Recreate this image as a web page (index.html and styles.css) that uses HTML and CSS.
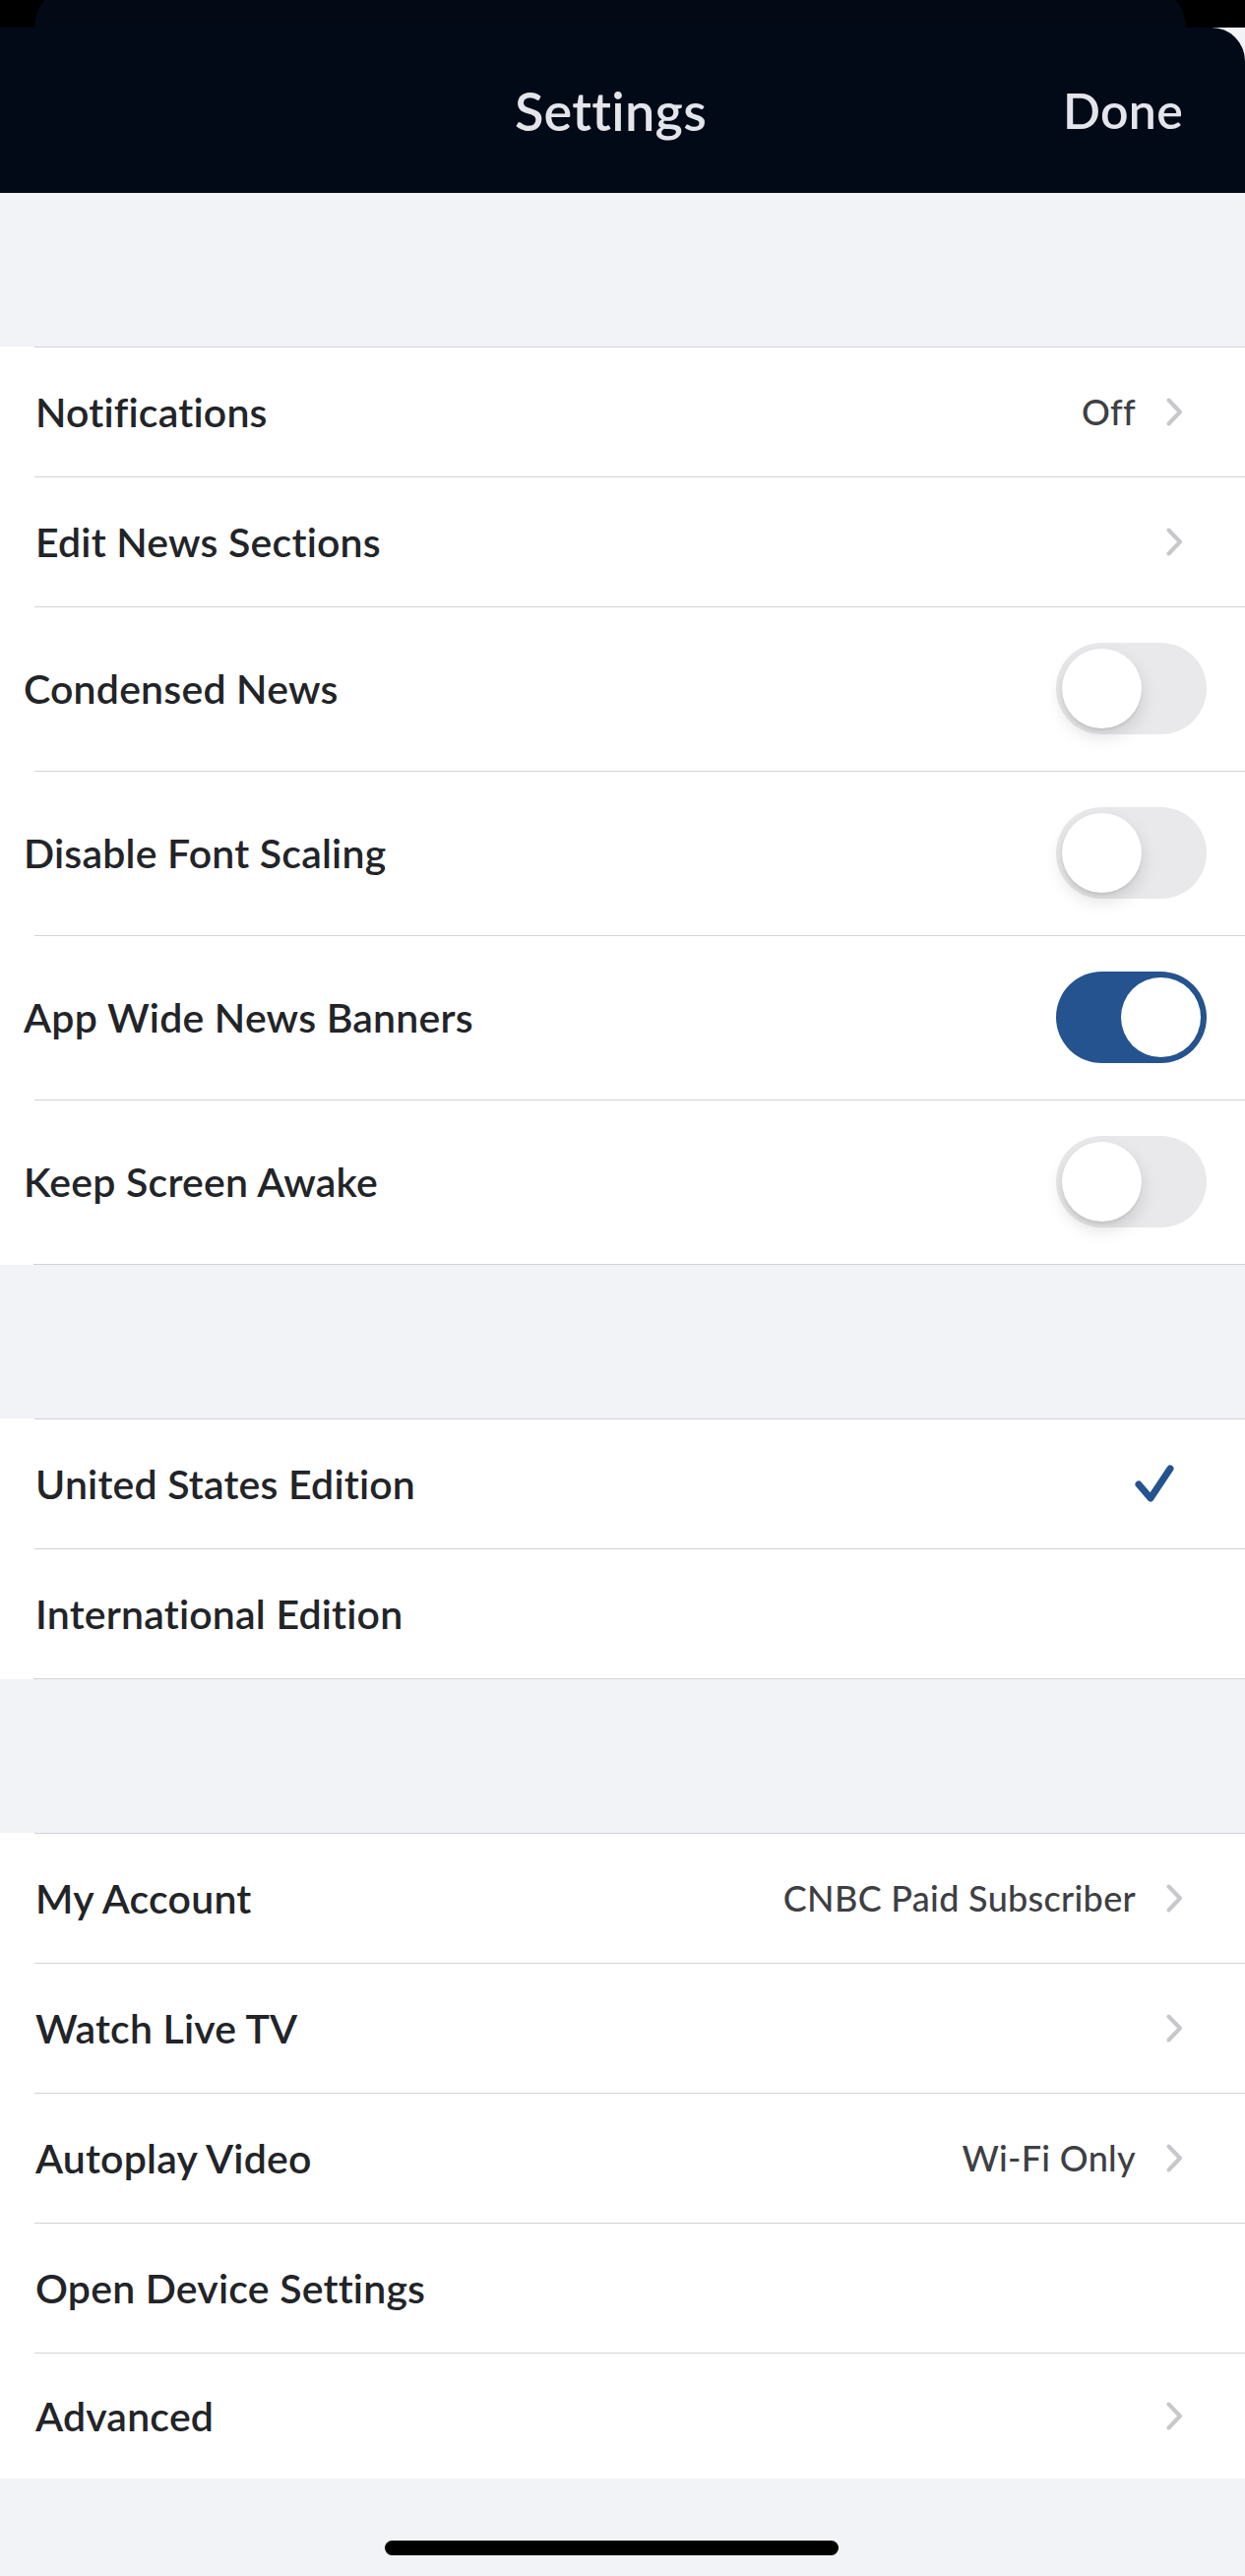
FILE: index.html
```html
<!DOCTYPE html>
<html lang="en">
<head>
  <meta charset="UTF-8" />
  <meta name="viewport" content="width=device-width, initial-scale=1.0"/>
  <title>Settings</title>
  <link rel="stylesheet" href="styles.css">
</head>
<body>
  <div class="top-strip"><div class="back-card"></div></div>

  <header class="nav-bar">
    <span></span>
    <h1 class="nav-title">Settings</h1>
    <button class="nav-done">Done</button>
  </header>

  <main class="settings">
    <div class="spacer"></div>

    <section class="group closed">
      <div class="row">
        <span class="label">Notifications</span>
        <span class="value">Off</span>
        <svg class="chevron" viewBox="0 0 17 29"><path d="M2.5 2.5 L14 14.5 L2.5 26.5"/></svg>
      </div>
      <div class="row">
        <span class="label">Edit News Sections</span>
        <svg class="chevron" viewBox="0 0 17 29"><path d="M2.5 2.5 L14 14.5 L2.5 26.5"/></svg>
      </div>
      <div class="row toggle-row">
        <span class="label">Condensed News</span>
        <span class="switch"><span class="knob"></span></span>
      </div>
      <div class="row toggle-row">
        <span class="label">Disable Font Scaling</span>
        <span class="switch"><span class="knob"></span></span>
      </div>
      <div class="row toggle-row">
        <span class="label">App Wide News Banners</span>
        <span class="switch on"><span class="knob"></span></span>
      </div>
      <div class="row toggle-row">
        <span class="label">Keep Screen Awake</span>
        <span class="switch"><span class="knob"></span></span>
      </div>
    </section>

    <div class="spacer"></div>

    <section class="group closed">
      <div class="row">
        <span class="label">United States Edition</span>
        <svg class="check" viewBox="0 0 40 38"><path d="M4 20 L16 34 L36 4"/></svg>
      </div>
      <div class="row">
        <span class="label">International Edition</span>
      </div>
    </section>

    <div class="spacer"></div>

    <section class="group">
      <div class="row">
        <span class="label">My Account</span>
        <span class="value">CNBC Paid Subscriber</span>
        <svg class="chevron" viewBox="0 0 17 29"><path d="M2.5 2.5 L14 14.5 L2.5 26.5"/></svg>
      </div>
      <div class="row">
        <span class="label">Watch Live TV</span>
        <svg class="chevron" viewBox="0 0 17 29"><path d="M2.5 2.5 L14 14.5 L2.5 26.5"/></svg>
      </div>
      <div class="row">
        <span class="label">Autoplay Video</span>
        <span class="value">Wi-Fi Only</span>
        <svg class="chevron" viewBox="0 0 17 29"><path d="M2.5 2.5 L14 14.5 L2.5 26.5"/></svg>
      </div>
      <div class="row">
        <span class="label">Open Device Settings</span>
      </div>
      <div class="row last">
        <span class="label">Advanced</span>
        <svg class="chevron" viewBox="0 0 17 29"><path d="M2.5 2.5 L14 14.5 L2.5 26.5"/></svg>
      </div>
    </section>
  </main>

  <div class="home-bar"><span class="home-indicator"></span></div>
</body>
</html>
```

FILE: styles.css
```css
:root {
  --navy: #020a17;
  --line: #d3d3d8;
  --gray-bg: #f2f3f7;
  --blue: #24538f;
}

body {
  margin: 0;
  background: var(--gray-bg);
  font-family: "Lato", "Open Sans", sans-serif;
  color: #222428;
}

.top-strip {
  height: 28px;
  background: #000;
  overflow: hidden;
}

.back-card {
  height: 60px;
  margin: -14px 60px 0 35px;
  border-radius: 42px 42px 0 0;
  background: #040a15;
}

/* title sits on the 1242px-wide device centre, not the image centre */
.nav-bar {
  display: grid;
  grid-template-columns: 1fr auto 1fr;
  align-items: center;
  height: 168px;
  padding: 0 63px;
  background: var(--navy);
  border-top-right-radius: 34px;
  color: #e4e5eb;
}

.nav-title {
  margin: 0 24px 0 0;
  font-size: 54px;
  font-weight: 600;
  letter-spacing: 0.3px;
}

.nav-done {
  justify-self: end;
  padding: 0;
  border: none;
  background: none;
  color: inherit;
  font-family: inherit;
  font-size: 50px;
  font-weight: 600;
  letter-spacing: 0.3px;
}

.spacer {
  height: 156px;
}

.group {
  background: #fff;
}

.group.closed {
  border-bottom: 1px solid var(--line);
  border-image: linear-gradient(to right, #fff 35px, var(--line) 35px) 1;
}

.row {
  display: flex;
  align-items: center;
  box-sizing: border-box;
  height: 132px;
  padding: 0 63px 0 36px;
  background: linear-gradient(var(--line), var(--line)) 35px 0 / 100% 1px no-repeat, #fff;
}

.row.toggle-row {
  height: 167px;
  padding: 0 39px 0 24px;
}

.row.last {
  height: 128px;
}

.label {
  flex: 1;
  font-size: 41px;
  font-weight: 600;
  letter-spacing: 0.2px;
}

.value {
  margin-right: 31px;
  font-size: 36px;
  font-weight: 500;
  color: #3e3f44;
  letter-spacing: 0.3px;
}

.chevron {
  width: 17px;
  height: 29px;
  fill: none;
  stroke: #c7c7cc;
  stroke-width: 4;
  stroke-linecap: round;
  stroke-linejoin: round;
}

.check {
  width: 40px;
  height: 38px;
  margin-right: 9px;
  fill: none;
  stroke: var(--blue);
  stroke-width: 7;
  stroke-linecap: round;
  stroke-linejoin: round;
}

.switch {
  display: flex;
  box-sizing: border-box;
  width: 153px;
  height: 93px;
  padding: 6px;
  border-radius: 47px;
  background: #e9e9eb;
}

.switch.on {
  justify-content: flex-end;
  background: var(--blue);
}

.knob {
  width: 81px;
  height: 81px;
  border-radius: 50%;
  background: #fff;
  box-shadow: 0 8px 18px rgba(0, 0, 0, 0.13), 0 2px 3px rgba(0, 0, 0, 0.08);
}

.switch.on .knob {
  box-shadow: none;
}

.home-bar {
  display: flex;
  justify-content: center;
  height: 102px;
  padding: 0 23px 0 0;
}

.home-indicator {
  width: 461px;
  height: 15px;
  margin-top: 63px;
  border-radius: 8px;
  background: #000;
}
```
